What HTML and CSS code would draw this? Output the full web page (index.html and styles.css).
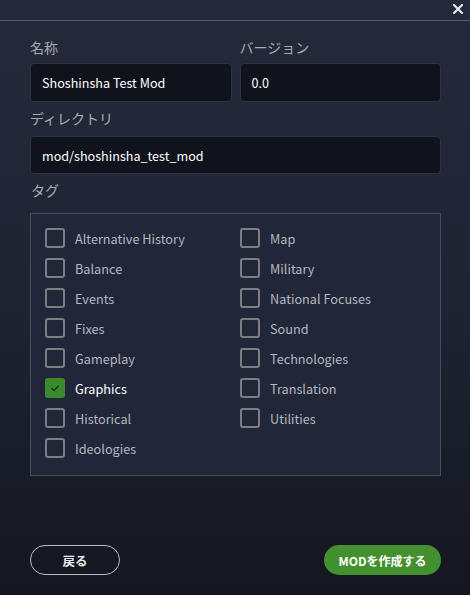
FILE: index.html
```html
<!DOCTYPE html>
<html lang="ja">
<head>
<meta charset="utf-8">
<link rel="stylesheet" href="styles.css">
</head>
<body>
<div class="titlebar">
  <span class="close">
    <svg width="10" height="10" viewBox="0 0 10 10"><path d="M1 1L9 9M9 1L1 9" stroke="#e4e6ea" stroke-width="2.2" stroke-linecap="square"/></svg>
  </span>
</div>
<main class="form">
  <div class="row2">
    <div class="field">
      <div class="label">名称</div>
      <div class="input">Shoshinsha Test Mod</div>
    </div>
    <div class="field">
      <div class="label">バージョン</div>
      <div class="input">0.0</div>
    </div>
  </div>
  <div class="label label-dir">ディレクトリ</div>
  <div class="input input-dir">mod/shoshinsha_test_mod</div>
  <div class="label label-tag">タグ</div>
  <div class="tags">
    <div class="tag-col">
      <div class="tag"><span class="cb"></span><span>Alternative History</span></div>
      <div class="tag"><span class="cb"></span><span>Balance</span></div>
      <div class="tag"><span class="cb"></span><span>Events</span></div>
      <div class="tag"><span class="cb"></span><span>Fixes</span></div>
      <div class="tag"><span class="cb"></span><span>Gameplay</span></div>
      <div class="tag checked"><span class="cb"><svg width="12" height="12" viewBox="0 0 12 12"><path d="M2.5 6.2L5 8.6L9.6 3.6" fill="none" stroke="#1c2a18" stroke-width="1.4"/></svg></span><span>Graphics</span></div>
      <div class="tag"><span class="cb"></span><span>Historical</span></div>
      <div class="tag"><span class="cb"></span><span>Ideologies</span></div>
    </div>
    <div class="tag-col">
      <div class="tag"><span class="cb"></span><span>Map</span></div>
      <div class="tag"><span class="cb"></span><span>Military</span></div>
      <div class="tag"><span class="cb"></span><span>National Focuses</span></div>
      <div class="tag"><span class="cb"></span><span>Sound</span></div>
      <div class="tag"><span class="cb"></span><span>Technologies</span></div>
      <div class="tag"><span class="cb"></span><span>Translation</span></div>
      <div class="tag"><span class="cb"></span><span>Utilities</span></div>
    </div>
  </div>
  <div class="footer">
    <button class="btn btn-back">戻る</button>
    <button class="btn btn-create">MODを作成する</button>
  </div>
</main>
</body>
</html>
```
FILE: styles.css
```css
* { box-sizing: border-box; }
html, body { margin: 0; padding: 0; }
body {
  width: 470px;
  height: 595px;
  overflow: hidden;
  background: linear-gradient(180deg, #252a3b 0%, #1f2433 50%, #141720 100%);
  font-family: "Noto Sans CJK JP", "Noto Sans", sans-serif;
  color: #e8eaee;
  display: flex;
  flex-direction: column;
}
.titlebar {
  height: 21px;
  border-bottom: 1px solid #5b5f6b;
  display: flex;
  justify-content: flex-end;
  align-items: center;
  padding-right: 7px;
  flex-shrink: 0;
}
.close { display: flex; width: 10px; height: 10px; margin-top: -2px; }
.form {
  flex: 1;
  display: flex;
  flex-direction: column;
  padding: 16px 29px 20px 30px;
}
.row2 { display: flex; gap: 8px; }
.field { flex: 1; display: flex; flex-direction: column; }
.label {
  height: 20px;
  line-height: 20px;
  font-size: 14px;
  color: #a8abb2;
  margin-bottom: 6px;
}
.input {
  height: 39px;
  background: #10131b;
  border: 1px solid #2f3340;
  border-radius: 4px;
  padding: 0 11px;
  display: flex;
  align-items: center;
  font-size: 12.6px;
  color: #ffffff;
}
.label-dir { margin-top: 6px; margin-bottom: 8px; }
.input-dir { height: 38px; }
.label-tag { margin-top: 6px; margin-bottom: 13px; padding-left: 1px; }
.tags {
  height: 263px;
  border: 1px solid #4a4d57;
  background: #212638;
  padding: 14px 14px;
  display: grid;
  grid-template-columns: 195px 1fr;
}
.tag-col { display: flex; flex-direction: column; gap: 10px; }
.tag {
  display: flex;
  align-items: center;
  height: 20px;
  gap: 10px;
  font-size: 12.7px;
  color: #b4b8c1;
}
.cb {
  width: 20px;
  height: 20px;
  border: 2px solid #7c7e84;
  border-radius: 3px;
  flex-shrink: 0;
  display: flex;
  align-items: center;
  justify-content: center;
}
.tag.checked .cb { background: #3a8a2b; border-color: #3a8a2b; }
.tag.checked { color: #ffffff; }
.footer {
  margin-top: auto;
  display: flex;
  justify-content: space-between;
}
.btn {
  height: 30px;
  border-radius: 15px;
  font-family: "Noto Sans CJK JP", sans-serif;
  font-weight: bold;
  font-size: 12.5px;
  color: #e8eaee;
  cursor: pointer;
}
.btn-back {
  width: 90px;
  background: transparent;
  border: 1px solid #b9bcc4;
}
.btn-create {
  width: 117px;
  background: #43902f;
  border: none;
  color: #ffffff;
  font-size: 12px;
}
```
